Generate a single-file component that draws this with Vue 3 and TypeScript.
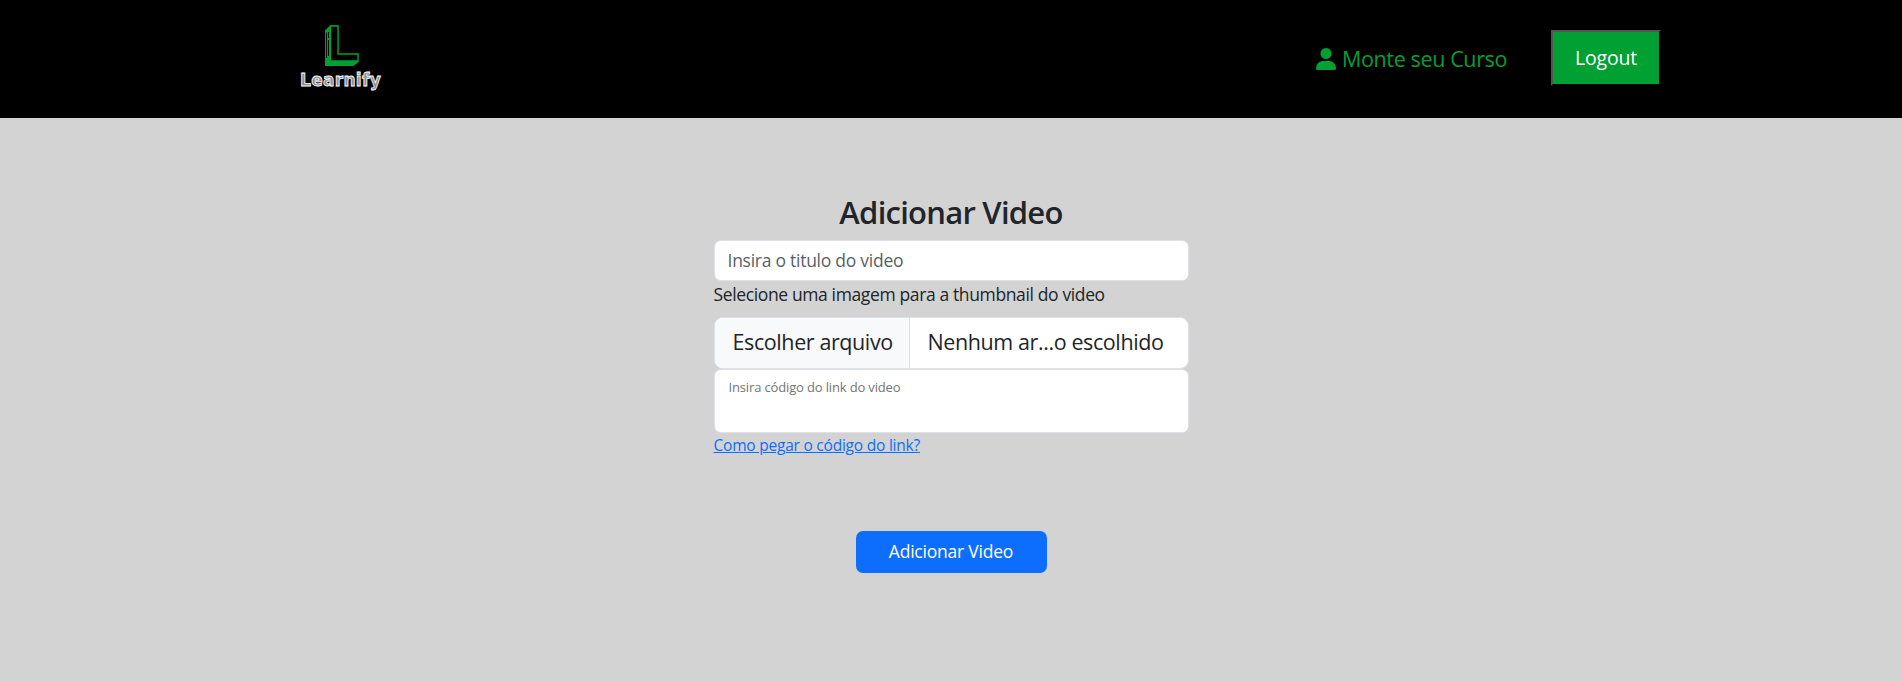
<script setup lang="ts">
import { ref } from 'vue'

const title = ref('')
const code = ref('')
</script>

<template>
  <div class="page">
    <header class="topbar">
      <div class="brand">
        <svg class="mark" viewBox="0 0 36 42" width="36" height="42">
          <path d="M1 5.500 6 .5H14.500V29H34.500V37L29.500 41H1Z" fill="#00a032" />
          <path d="M6.500 1H14V29H34V36H6.500Z" fill="#000" stroke="#00a032" stroke-width="1.300" />
          <path d="M2.500 7.500V33M4.500 7V13M4.500 15V31" stroke="#000" stroke-width=".9" />
        </svg>
        <span class="brand-name">Learnify</span>
      </div>
      <nav class="menu">
        <a class="course">
          <svg viewBox="0 0 20 22" width="20" height="22" fill="#00a032"><circle cx="10" cy="5.500" r="5.500" /><path d="M0 20.500C0 15.500 3.500 13 7.500 13H12.500C16.500 13 20 15.500 20 20.500Q20 22 18.500 22H1.500Q0 22 0 20.500Z" /></svg>
          <span>Monte seu Curso</span>
        </a>
        <button class="logout" type="button">Logout</button>
      </nav>
    </header>
    <main class="content">
      <form class="video-form" @submit.prevent>
        <h2>Adicionar Video</h2>
        <input v-model="title" class="field title-field" placeholder="Insira o titulo do video" />
        <p class="label">Selecione uma imagem para a thumbnail do video</p>
        <div class="field file">
          <span class="pick">Escolher arquivo</span><span class="chosen">Nenhum ar...o escolhido</span>
        </div>
        <textarea v-model="code" class="field code" placeholder="Insira código do link do video"></textarea>
        <a class="help">Como pegar o código do link?</a>
        <button class="submit" type="submit">Adicionar Video</button>
      </form>
    </main>
  </div>
</template>

<style>
body { background: #d3d3d3; }
</style>
<style scoped>
* { box-sizing: border-box; }
.page { height: 682px; overflow: hidden; background: #d3d3d3; color: #212529; font-family: "Open Sans", "Noto Sans", sans-serif; }
.topbar { height: 118px; background: #000; display: flex; justify-content: space-between; padding: 0 241px 0 300px; }
.brand { display: flex; flex-direction: column; width: 84px; padding-top: 25px; }
.mark { margin-left: 24px; }
.brand-name { font: 700 17px/27px "DejaVu Sans", sans-serif; letter-spacing: .3px; color: #8c8c8c; -webkit-text-stroke: .8px #fff; }
.menu { display: flex; align-items: flex-start; }
.course { display: flex; gap: 6px; margin-top: 48px; height: 22px; color: #00a032; font-size: 21.5px; letter-spacing: -.37px; line-height: 22px; white-space: nowrap; width: 235px; }
.logout { width: 110px; height: 56px; margin-top: 30px; border: 2px outset #000; background: #00a032; color: #fff; font: 400 19.5px "Open Sans"; letter-spacing: -.15px; padding: 0 0 1px; }
.video-form { width: 475px; margin: 0 auto; padding-top: 75px; display: flex; flex-direction: column; }
h2 { font-size: 31px; font-weight: 600; line-height: 38px; margin: 0 0 9px; letter-spacing: -.75px; text-align: center; }
.field { border: 1px solid #dee2e6; border-radius: 7px; background: #fff; width: 475px; color: #212529; }
.title-field { height: 40.500px; padding: 0 13px; font: 400 17.5px "Open Sans"; letter-spacing: -.26px; }
.title-field::placeholder { color: #595f64; }
.label { margin: 0; font-size: 17.5px; letter-spacing: -.37px; line-height: 27px; height: 36.500px; white-space: nowrap; }
.file { height: 51.500px; display: flex; font-size: 21.5px; letter-spacing: -.4px; line-height: 48px; overflow: hidden; white-space: nowrap; border-radius: 9px; }
.pick { width: 195px; background: #f8f9fa; border-right: 1px solid #dee2e6; padding-left: 18px; }
.chosen { padding-left: 18px; }
.code { height: 64px; padding: 7px 14px; font: 400 13px/20px "Open Sans"; letter-spacing: -.15px; resize: none; }
.help { font-size: 15.5px; letter-spacing: -.22px; line-height: 24px; color: #0d6efd; text-decoration: underline; }
.submit { width: 191px; height: 42px; margin: 74px auto 0; border: 0; border-radius: 7px; background: #0d6efd; color: #fff; font: 400 17.5px "Open Sans"; letter-spacing: -.22px; padding: 0 0 1px; }
</style>
